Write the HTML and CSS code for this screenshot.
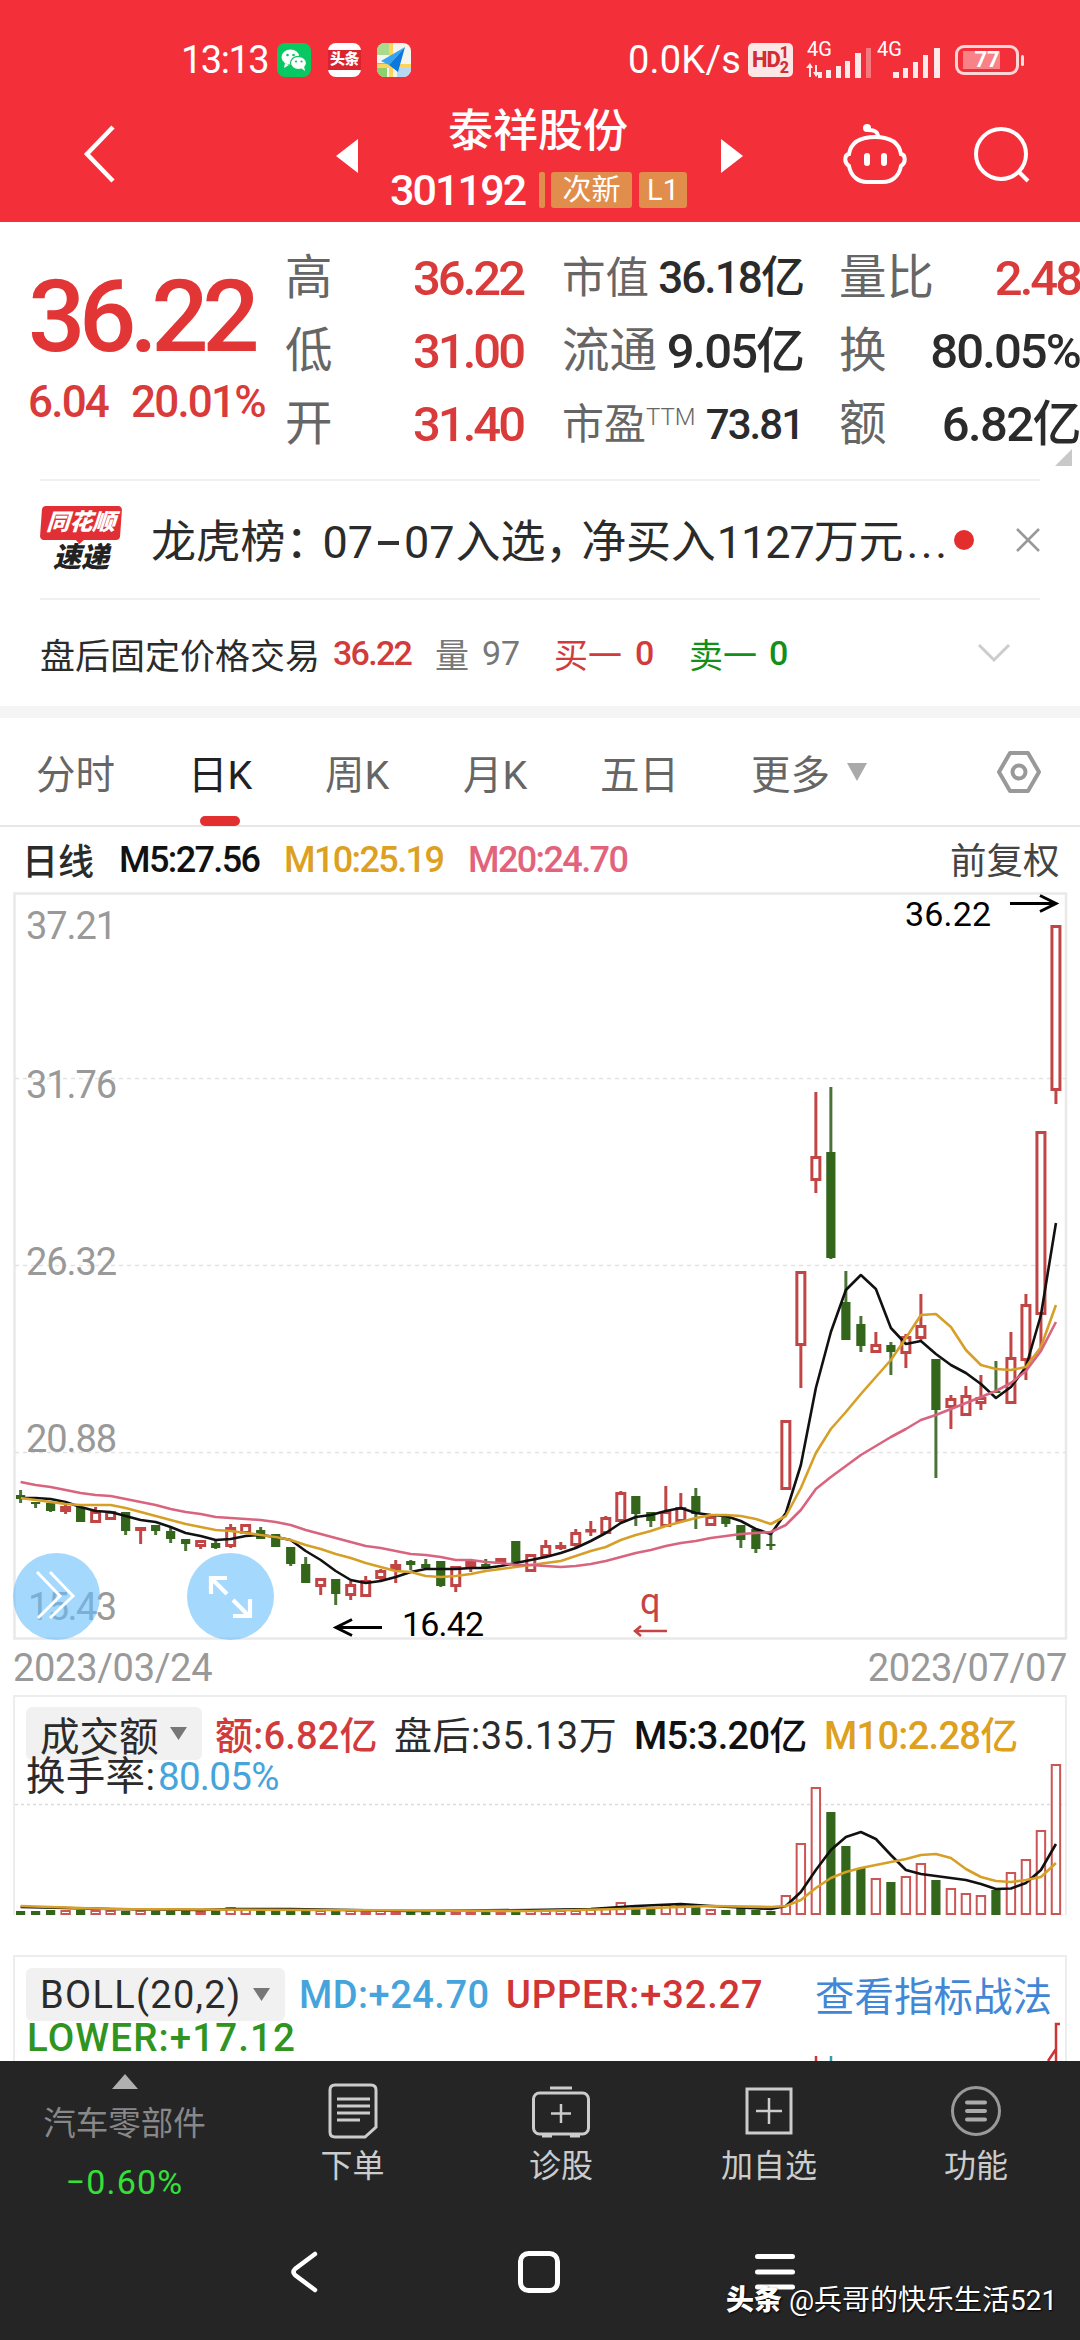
FILE: index.html
```html
<!DOCTYPE html>
<html lang="zh-CN">
<head>
<meta charset="utf-8">
<title>泰祥股份 301192</title>
<link rel="stylesheet" href="styles.css">
</head>
<body>
<div class="screen">
  <header class="header">
    <div class="status">
      <span class="clock">13:13</span>
      <svg width="34" height="34" viewBox="0 0 34 34"><rect width="34" height="34" rx="8" fill="#08c862"/><ellipse cx="13.5" cy="14" rx="9" ry="7.6" fill="#fff"/><path d="M8 20l-1 5 5-3z" fill="#fff"/><ellipse cx="21.5" cy="20" rx="8" ry="6.6" fill="#fff" stroke="#08c862" stroke-width="1.2"/><path d="M24 25l4 3-1-5z" fill="#fff"/><g fill="#08c862"><circle cx="10.5" cy="12" r="1.3"/><circle cx="16.5" cy="12" r="1.3"/><circle cx="19" cy="18.5" r="1.1"/><circle cx="24.5" cy="18.5" r="1.1"/></g></svg>
      <span class="toutiao"><b>头条</b></span>
      <svg width="34" height="34" viewBox="0 0 34 34"><clipPath id="mapclip"><rect width="34" height="34" rx="8"/></clipPath><g clip-path="url(#mapclip)"><rect width="34" height="34" fill="#f3f5ee"/><path d="M0 0h14v12H0z" fill="#a8dc8c"/><path d="M0 20h10v14H0z" fill="#8ccf6c"/><path d="M20 24h14v10H20z" fill="#b7d8f5"/><path d="M14 0v34M0 23h34" stroke="#ffd45c" stroke-width="4"/><path d="M28 4L4 18l8 4z" fill="#38a3f5"/><path d="M28 4L12 22l9 7z" fill="#0b78dd"/></g></svg>
      <span class="speed">0.0K/s</span>
      <span class="hd"><b>HD</b><i>1<br>2</i></span>
      <svg class="signal" width="66" height="44" viewBox="0 -6 66 44"><text x="1" y="15" class="net">4G</text><g fill="#fff" opacity=".9"><path d="M4 22l3 5H5v9H3v-9H0zM10 36l-3-5h2v-7h2v7h3zM12 31h4v6h-4zM20 29h5v8h-5zM30 25h5v12h-5zM39 20h5v17h-5zM49 12h6v25h-6z"/><path d="M60 7h5v30h-5z" opacity=".4"/></g></svg>
      <svg class="signal" width="66" height="44" viewBox="0 -6 66 44"><text x="0" y="15" class="net">4G</text><g fill="#fff" opacity=".9"><path d="M16 31h6v6h-6zM26 27h5v10h-5zM36 21h5v16h-5zM46 14h5v23h-5zM57 7h6v30h-6z"/></g></svg>
      <span class="battery"><b>77</b></span>
    </div>
    <div class="titlebar">
      <svg width="34" height="62" viewBox="0 0 34 62"><path d="M31 4L5 31l26 27" fill="none" stroke="#fff" stroke-width="4.5"/></svg>
      <svg width="22" height="34" viewBox="0 0 22 34"><path d="M22 0v34L0 17z" fill="#fff"/></svg>
      <div class="stock">
        <h1>泰祥股份</h1>
        <div class="code"><span class="num">301192</span><i class="sliver"></i><span class="tag tag-new">次新</span><span class="tag">L1</span></div>
      </div>
      <svg width="22" height="34" viewBox="0 0 22 34"><path d="M0 0v34l22-17z" fill="#fff"/></svg>
      <svg width="66" height="62" viewBox="0 0 66 62"><g fill="none" stroke="#fff" stroke-width="4"><path d="M7 31C9 19 19 14 33 14s24 5 26 17c5 1 5 9 0 12-2 11-10 16-18 16H25C17 59 9 54 7 43c-5-3-5-11 0-12z"/><path d="M36 14c0-6-4-7-10-7" /></g><circle cx="25" cy="5" r="4" fill="#fff"/><path d="M25 33v7M42 33v7" stroke="#fff" stroke-width="6" stroke-linecap="round"/></svg>
      <svg width="58" height="58" viewBox="0 0 58 58"><g fill="none" stroke="#fff" stroke-width="4"><circle cx="29" cy="28" r="25"/><path d="M47 46l9 9"/></g></svg>
    </div>
  </header>

  <section class="quote">
    <div class="price">
      <strong>36.22</strong>
      <div class="change"><span>6.04</span><span>20.01%</span></div>
    </div>
    <div class="stats">
      <span>高</span><b class="up">36.22</b><span class="s44">市值</span><b class="cap">36.18亿</b><span>量比</span><b class="up last">2.48</b>
      <span>低</span><b class="up">31.00</b><span>流通</span><b class="flow">9.05亿</b><span>换</span><b class="turn last">80.05%</b>
      <span>开</span><b class="up">31.40</b><span class="s42">市盈<sup>TTM</sup></span><b class="pe">73.81</b><span>额</span><b class="last amount">6.82亿</b>
    </div>
    <svg class="corner" width="17" height="17" viewBox="0 0 17 17"><path d="M17 0v17H0z" fill="#c9c9c9"/></svg>
  </section>

  <section class="news">
    <div class="brand"><span class="brand-top">同花顺</span><span class="brand-sub">速递</span></div>
    <p>龙虎榜<span class="colon">：</span><span class="nums">07<i></i>07</span>入选<span class="comma">，</span>净买入<span class="n2">1127</span>万元<span class="dots">...</span></p>
    <i class="dot"></i>
    <svg width="24" height="24" viewBox="0 0 24 24"><path d="M1 1l22 22M23 1L1 23" stroke="#999" stroke-width="2.6"/></svg>
  </section>

  <section class="after">
    <span>盘后固定价格交易</span><b class="up">36.22</b><span class="gray">量</span><span class="gray num">97</span><span class="up">买一</span><b class="up">0</b><span class="down">卖一</span><b class="down">0</b>
    <svg width="34" height="20" viewBox="0 0 34 20"><path d="M2 2l15 15L32 2" fill="none" stroke="#ccc" stroke-width="3"/></svg>
  </section>

  <nav class="tabs">
    <span>分时</span><span class="active">日K</span><span>周K</span><span>月K</span><span>五日</span><span>更多<svg width="20" height="18" viewBox="0 0 20 18"><path d="M0 0h20L10 18z" fill="#aaa"/></svg></span>
    <svg width="46" height="44" viewBox="0 0 46 44"><path d="M14 3h18l11 19-11 19H14L3 22z" fill="none" stroke="#999" stroke-width="4" stroke-linejoin="round"/><circle cx="23" cy="22" r="6.5" fill="none" stroke="#999" stroke-width="4"/></svg>
  </nav>

  <div class="ma-row"><span class="kname">日线</span><b>M5:27.56</b><b class="gold">M10:25.19</b><b class="pink">M20:24.70</b><span class="adj">前复权</span></div>

  <section class="kchart">
    <svg id="kline" width="1080" height="748" viewBox="0 0 1080 748">
      <path d="M14.500 1.500H1066V746.500H14.500z" fill="none" stroke="#e9e9e9" stroke-width="2.500"/>
      <path d="M15 186.500H1066M15 373.500H1066M15 560.500H1066" stroke="#e2e2e2" stroke-width="1.500" stroke-dasharray="4 4"/>
      <g class="axis">
        <text x="26" y="47" textLength="91">37.21</text><text x="26" y="206" textLength="91">31.76</text><text x="26" y="383" textLength="91">26.32</text><text x="26" y="560" textLength="91">20.88</text><text x="28" y="728" textLength="89">15.43</text>
      </g>
      <g id="series"></g>
      <g class="mark"><text x="905" y="34" textLength="86">36.22</text><text x="402" y="744" textLength="82">16.42</text></g>
      <path d="M1010 11.500h45M1040 3.500l16 8-16 8M382 735.500h-45M352 727.500l-16 8 16 8" fill="none" stroke="#000" stroke-width="3"/>
      <text x="640" y="722" class="q">q</text>
      <path d="M667 739h-31M641 734l-6 5 6 5" fill="none" stroke="#c64444" stroke-width="2.500"/>
    </svg>
    <div class="floats">
      <span class="float"><svg width="86" height="86" viewBox="0 0 86 86"><path d="M24 19l23 24-22 22M37 19l23 24-23 22" fill="none" stroke="#fff" stroke-width="3"/></svg></span>
      <span class="float"><svg width="86" height="86" viewBox="0 0 86 86"><path d="M24 41V25h16M26 27l14 14M46 47l16 16M63 46v17H46" fill="none" stroke="#fff" stroke-width="4.200"/></svg></span>
    </div>
  </section>
  <div class="dates"><span>2023/03/24</span><span>2023/07/07</span></div>

  <section class="volume">
    <div class="ind-row vrow"><span class="select">成交额<svg width="17" height="13" viewBox="0 0 17 13"><path d="M0 0h17L8.500 13z" fill="#777"/></svg></span><span class="up med amt">额:6.82亿</span><span class="post">盘后:35.13万</span><span class="black med">M5:3.20亿</span><span class="gold med">M10:2.28亿</span></div>
    <div class="ind-sub"><span class="rate">换手率:</span><span class="blue">80.05%</span></div>
    <svg id="vols" class="vols" width="1052" height="220" viewBox="14 0 1052 220"></svg>
  </section>

  <section class="boll">
    <div class="ind-row brow"><span class="select">BOLL(20,2)<svg width="17" height="13" viewBox="0 0 17 13"><path d="M0 0h17L8.500 13z" fill="#777"/></svg></span><span class="blue med md">MD:+24.70</span><span class="crimson med upper">UPPER:+32.27</span><a>查看指标战法</a></div>
    <div class="ind-sub lower">LOWER:+17.12</div>
    <svg class="vols" width="1052" height="106" viewBox="14 0 1052 106"><path d="M1060 69h-4v37M1048 106l8-12v12M816 101v5" fill="none" stroke="#cf3434" stroke-width="2.500"/><path d="M831 101v5" stroke="#3b9aa8" stroke-width="2.500"/></svg>
  </section>

  <footer class="bottom">
    <div class="sector"><svg width="26" height="15" viewBox="0 0 26 15"><path d="M13 0l13 15H0z" fill="#b0b0b0"/></svg><span>汽车零部件</span><b>−0.60%</b></div>
    <div class="item"><svg width="50" height="56" viewBox="0 0 50 56"><path d="M7 2h36q5 0 5 5v37L37 54H7q-5 0-5-5V7q0-5 5-5z" fill="none" stroke="#ccc" stroke-width="3"/><path d="M9 16h33M9 23h33M9 30h33M9 37h23" stroke="#ccc" stroke-width="3"/></svg><span>下单</span></div>
    <div class="item"><svg width="60" height="56" viewBox="0 0 60 56"><rect x="2.500" y="10" width="55" height="41" rx="6" fill="none" stroke="#ccc" stroke-width="3"/><path d="M19 5h22M11 53h10M39 53h10" stroke="#ccc" stroke-width="3"/><path d="M30 21v19M20 30.500h20" stroke="#ccc" stroke-width="2.500"/></svg><span>诊股</span></div>
    <div class="item"><svg width="50" height="56" viewBox="0 0 50 56"><rect x="3" y="6" width="44" height="44" fill="none" stroke="#ccc" stroke-width="3"/><path d="M25 15v26M12 28h26" stroke="#ccc" stroke-width="2.500"/></svg><span>加自选</span></div>
    <div class="item"><svg width="52" height="56" viewBox="0 0 52 56"><circle cx="26" cy="28" r="23.500" fill="none" stroke="#999" stroke-width="3"/><path d="M17 19.500h18M17 28h18M17 36.500h18" stroke="#aaa" stroke-width="4" stroke-linecap="round"/></svg><span>功能</span></div>
  </footer>
  <div class="sysnav">
    <svg width="28" height="42" viewBox="0 0 28 42"><path d="M25 3L5 18q-3 3 0 6l20 15" fill="none" stroke="#fff" stroke-width="4.500" stroke-linecap="round"/></svg>
    <svg width="42" height="42" viewBox="0 0 42 42"><rect x="2.500" y="2.500" width="37" height="37" rx="8" fill="none" stroke="#fff" stroke-width="5"/></svg>
    <svg width="40" height="38" viewBox="0 0 40 38"><path d="M2.500 3.500h35M2.500 19h35M2.500 34h35" stroke="#fff" stroke-width="5" stroke-linecap="round"/></svg>
    <div class="watermark"><b>头条</b> @兵哥的快乐生活521</div>
  </div>
</div>
<script src="chart.js"></script>
</body>
</html>
```

FILE: styles.css
```css
* { box-sizing: border-box; }
body { margin: 0; background: #fff; font-family: Roboto, "Noto Sans CJK SC", sans-serif; color: #2b2b2b; }
svg { display: block; flex: none; overflow: visible; }
i { font-style: normal; }
b { font-weight: 500; }
.screen { width: 1080px; height: 2340px; overflow: hidden; display: flex; flex-direction: column; white-space: nowrap; }
.screen > * { flex: none; }
.up { color: #d23b3b; }
.down { color: #129018; }
.gold { color: #dda01f; }
.pink { color: #e2637c; }
.blue { color: #46a4dd; }
.black { color: #111; }
.crimson { color: #d03434; }
.med { font-weight: 500; }
.gray { color: #777; }

.header { height: 222px; background: #f3303a; color: #fff; }
.status { height: 85px; padding: 34px 0 0 181px; display: grid; grid-template-columns: 96px 51px 49px 251px 120px 58px 71px 78px 72px; align-items: center; font-size: 38px; }
.clock { letter-spacing: -1.5px; }
.speed { letter-spacing: 0.2px; }
.toutiao { width: 33px; height: 34px; border-radius: 8px; background: linear-gradient(#fff 7px, #d9232e 7px 27px, #fff 27px); display: grid; place-items: center; }
.toutiao b { font-size: 15px; font-weight: 900; line-height: 1; letter-spacing: -0.5px; }
.hd { width: 45px; height: 34px; border-radius: 5px; background: #fde6e6; color: #d22c34; display: flex; align-items: center; justify-content: center; font-size: 22px; }
.hd b { font-weight: 800; letter-spacing: -1px; }
.hd i { font-size: 16px; line-height: 15px; font-weight: 800; }
.signal { margin-top: -5px; }
.net { font-size: 20px; fill: #fff; }
.battery { width: 64px; height: 30px; border: 3px solid rgba(255,255,255,.8); border-radius: 9px; display: grid; place-items: center; position: relative; background: linear-gradient(rgba(255,255,255,.4), rgba(255,255,255,.4)) 5px 3px / 37px 18px no-repeat; }
.battery b { font-size: 22px; line-height: 20px; font-weight: 700; }
.battery::after { content: ""; position: absolute; right: -8px; top: 7px; width: 3px; height: 11px; background: rgba(255,255,255,.85); border-radius: 2px; }
.titlebar { height: 137px; padding-left: 82px; display: grid; grid-template-columns: 254px 54px 331px 121px 130px 60px; align-items: center; }
.titlebar > svg:nth-child(2), .titlebar > svg:nth-child(4) { margin-top: 5px; }
.titlebar > svg:nth-child(6) { margin-top: 3px; }
.stock { height: 137px; }
.stock h1 { margin: 20px 0 0 58px; font-size: 45px; line-height: 54px; font-weight: 500; }
.code { display: flex; align-items: center; margin-top: 12px; height: 38px; }
.code .num { width: 149px; font-size: 43px; line-height: 38px; font-weight: 500; letter-spacing: -1.9px; }
.sliver { width: 6px; height: 36px; background: #e18d4b; margin-right: 6px; border-radius: 2px; }
.tag { height: 36px; width: 48px; background: #e18d4b; border-radius: 3px; font-size: 29px; line-height: 36px; text-align: center; }
.tag-new { width: 81px; margin-right: 7px; }

.quote { height: 257px; display: grid; grid-template-columns: 286px 794px; position: relative; }
.price { padding: 40px 0 0 28px; color: #e23535; }
.price strong { display: block; font-size: 101px; line-height: 110px; font-weight: 500; letter-spacing: -6.5px; }
.change { display: grid; grid-template-columns: 103px auto; margin-top: 5px; font-size: 44px; line-height: 50px; font-weight: 500; letter-spacing: -1.8px; color: #d93a3a; }
.stats { padding-top: 20px; display: grid; grid-template-columns: 110px 167px 100px 177px 90px 150px; grid-template-rows: repeat(3, 73px); font-size: 49px; line-height: 73px; color: #2b2b2b; }
.stats > span { color: #666; font-size: 47.500px; margin-left: -1px; }
.stats > b { justify-self: end; letter-spacing: -3px; margin-right: 37px; }
.stats > .up { color: #d93a3a; margin-right: 40px; }
.stats > .last { margin-right: 0; }
.stats > .turn { letter-spacing: -1.9px; }
.stats > .amount { letter-spacing: -1.6px; }
.stats > .cap { font-size: 44px; letter-spacing: -1.9px; }
.stats > .flow { letter-spacing: -2px; }
.stats > .pe { font-size: 42px; letter-spacing: -2px; }
.stats > .s44 { font-size: 43.500px; }
.stats > .s42 { font-size: 42px; }
.stats sup { font-size: 24px; line-height: 1; vertical-align: 14px; font-weight: 300; }
.corner { position: absolute; right: 8px; bottom: 13px; }

.news { height: 121px; margin: 0 40px; border-top: 2px solid #f0f0f0; border-bottom: 2px solid #f0f0f0; display: grid; grid-template-columns: 111px 803px 62px 24px; align-items: center; }
.news p { margin: -2px 0 0; font-size: 45px; letter-spacing: -0.2px; }
.colon { letter-spacing: -8px; }
.comma { letter-spacing: -9px; }
.nums { display: inline-flex; align-items: center; letter-spacing: 0; margin-right: 1px; }
.nums i { width: 21px; height: 4px; background: #333; margin: 0 5px; }
.n2 { letter-spacing: -1px; margin-left: 1px; }
.dots { letter-spacing: 2.500px; margin-left: 3px; }
.dot { width: 20px; height: 20px; border-radius: 50%; background: #e42e2e; }
.brand { display: flex; flex-direction: column; align-items: center; width: 82px; line-height: 1; font-style: italic; font-weight: 900; margin-top: 1px; }
.brand-top { width: 80px; height: 34px; background: #e22f35; color: #fff; border-radius: 4px; font-size: 23px; line-height: 33px; text-align: center; transform: skewX(-4deg); }
.brand-top::after { content: ""; position: absolute; left: 36px; top: 34px; border: 4px solid transparent; border-top-color: #e22f35; }
.brand-sub { font-size: 28px; line-height: 32px; color: #222; margin-top: 2px; }

.after { height: 118px; padding: 0 0 0 40px; border-bottom: 12px solid #f4f4f4; display: grid; grid-template-columns: 293px 102px 47px 72px 81px 54px 80px 208px 34px; align-items: center; font-size: 34px; }
.after > span:first-child { font-size: 35px; }
.after b { letter-spacing: -1.7px; }

.tabs { height: 109px; padding: 0 0 2px 36px; border-bottom: 2px solid #e6e6e6; display: grid; grid-template-columns: 152px 137px 138px 137px 151px 244px 46px; align-items: center; font-size: 39.500px; color: #666; }
.tabs > span { display: flex; align-items: center; height: 107px; position: relative; }
.tabs > span svg { margin-left: 17px; }
.tabs > svg { margin: 1px 0 0 1px; }
.tabs .active { color: #222; }
.tabs .active::after { content: ""; position: absolute; left: 12px; bottom: -1px; width: 40px; height: 10px; border-radius: 5px; background: #e22f2f; }

.ma-row { height: 65px; padding-left: 22px; display: grid; grid-template-columns: 97px 165px 184px 482px auto; align-items: center; font-size: 36px; }
.ma-row b { letter-spacing: -1.6px; }
.ma-row b:nth-child(2) { color: #111; }
.ma-row .kname { font-size: 36px; font-weight: 500; margin-top: -2px; }
.ma-row .adj { font-size: 36.500px; color: #444; margin-top: -2px; }
.ma-row .gold { color: #dda01f; }

.kchart { height: 748px; position: relative; }
.axis { font-size: 38px; fill: #999; }
.mark { font-size: 34px; fill: #000; }
.q { font-size: 36px; fill: #c64444; }
.floats { position: absolute; left: 13px; top: 661px; display: flex; gap: 87px; }
.float { width: 87px; height: 87px; border-radius: 50%; background: rgba(103, 190, 252, .6); }
.dates { height: 55px; padding: 0 13px; display: flex; justify-content: space-between; align-items: center; font-size: 38px; color: #999; letter-spacing: -0.3px; }

.volume { height: 220px; margin: 0 13px; border: 2px solid #ededed; border-bottom: 0; position: relative; }
.boll { height: 106px; margin: 40px 13px 0; border: 2px solid #ededed; border-bottom: 0; position: relative; }
.ind-row { display: grid; align-items: center; height: 53px; margin-top: 10px; padding-left: 11px; font-size: 38px; }
.vrow { grid-template-columns: 189px 179px 240px 190px auto; }
.vrow > span { letter-spacing: -0.7px; margin-top: -3px; }
.vrow > .amt { letter-spacing: 0.2px; }
.vrow > .post { letter-spacing: 0.5px; }
.brow { grid-template-columns: 273px 207px 309px auto; }
.brow > .md { letter-spacing: 0.5px; }
.brow > .upper { letter-spacing: 0.9px; }
.select { height: 53px; justify-self: start; display: flex; align-items: center; gap: 11px; padding: 0 15px 0 14px; background: #f1f1f1; border-radius: 6px; }
.vrow .select { letter-spacing: 0; font-size: 39.500px; margin-top: 0; }
.brow .select { letter-spacing: 1.3px; }
.ind-sub { padding-left: 11px; font-size: 38.500px; line-height: 36px; margin-top: -1px; letter-spacing: -0.7px; position: relative; z-index: 1; }
.rate { display: inline-block; width: 132px; font-size: 39.500px; letter-spacing: 0.3px; }
.lower { padding-left: 12px; color: #2f9420; font-weight: 500; letter-spacing: 1.1px; margin-top: 0; }
.boll a { font-size: 39.500px; color: #4287d6; margin-top: -2px; }
.vols { position: absolute; left: -1px; top: -2px; }

.bottom { height: 159px; background: #252525; color: #ccc; display: grid; grid-template-columns: 249px 207px 210px 206px 208px; font-size: 32px; position: relative; z-index: 2; }
.sector { display: flex; flex-direction: column; align-items: center; padding-top: 13px; }
.sector span { font-size: 32.500px; line-height: 40px; margin-top: 15px; color: #888; }
.sector b { color: #35e03a; font-size: 34px; letter-spacing: 1.2px; line-height: 40px; margin-top: 18px; font-weight: 400; }
.item { display: flex; flex-direction: column; align-items: center; padding-top: 22px; }
.item span { line-height: 40px; margin-top: 7px; }
.sysnav { height: 120px; background: #252525; position: relative; display: grid; grid-template-columns: 228px 237px 40px; padding: 31px 0 0 290px; align-items: start; }
.sysnav svg:nth-child(3) { margin-top: 2px; }
.watermark { position: absolute; left: 726px; top: 61px; font-size: 28px; line-height: 40px; color: #fff; letter-spacing: 0; text-shadow: 1px 1px 2px #000; }
.watermark b { font-weight: 900; }
.up-stroke { stroke: #c24545; fill: #fff; stroke-width: 3; }
.down-fill { fill: #33661a; }
.line { fill: none; stroke-width: 2.600; stroke-linejoin: round; }
```

FILE: chart.js
```js
// Each candle: direction (r = rise, g = fall), wick top, wick bottom, body top, body bottom
const candles = `g 598 611 603 607|g 610 616 610 612|g 610 620 611 619|r 613 622 614 620|g 615 630 615 630|r 615 631 619 631|r 619 628 619 628|g 620 643 620 639|r 635 652 635 639|g 633 643 633 639|g 636 651 639 647|g 647 659 647 652|r 648 657 648 655|g 648 657 651 656|r 632 656 635 655|r 632 642 632 642|g 635 647 638 647|g 642 655 642 655|g 655 674 655 672|g 665 691 672 691|r 686 703 686 695|g 687 713 687 702|r 689 708 692 704|r 684 705 688 705|r 677 688 678 687|r 668 691 672 678|g 668 678 669 673|g 667 677 672 676|g 669 695 669 694|r 674 700 674 695|r 667 680 669 675|g 667 677 672 676|r 666 672 666 672|g 649 670 649 670|r 662 680 662 680|r 648 666 653 665|r 650 658 653 657|r 637 656 640 654|r 629 644 637 639|r 624 642 625 642|r 599 631 600 630|g 604 634 604 622|g 620 635 620 629|r 594 635 619 635|r 601 631 615 630|g 596 637 604 622|r 624 634 624 634|g 624 635 625 632|g 633 656 633 648|g 636 661 637 657|g 641 658 652 654|r 528 598 528 598|r 379 496 379 454|r 200 301 264 289|g 195 367 260 366|g 379 448 410 448|g 424 460 432 454|r 440 461 452 461|g 450 483 453 460|r 442 476 444 462|r 402 448 433 447|g 467 586 467 518|r 503 537 506 516|r 494 524 503 524|r 483 518 505 512|g 469 501 499 501|r 440 512 465 512|r 402 488 412 469|r 239 455 239 423|r 33 212 33 199`
  .split('|').map(s => s.split(' ').map((v, i) => i ? +v : v));
const m5 = [606,606,607,610,615,619,620,624,628,630,635,641,644,648,647,644,643,645,648,659,668,679,688,691,689,685,680,677,677,677,676,676,674,671,668,665,661,656,649,641,631,625,623,619,616,621,623,624,629,637,642,621,573,496,440,398,383,397,436,452,449,462,473,481,492,506,495,475,423,331];
const m10 = [606,608,610,612,613,613,613,616,620,624,628,632,635,638,639,641,643,645,648,653,657,662,666,671,675,679,680,684,685,684,682,679,677,675,673,671,669,664,659,655,648,643,639,634,630,626,623,623,624,627,632,624,596,561,537,520,502,485,468,446,423,422,435,458,473,477,478,475,455,413];
const m20 = [590,593,595,598,601,603,604,607,610,613,617,620,622,625,626,627,628,630,633,638,642,646,650,654,656,659,662,663,665,668,668,670,671,673,673,674,675,674,672,669,665,661,658,654,651,649,646,644,642,641,640,633,618,597,585,574,563,554,545,537,528,523,517,511,505,499,491,479,459,430];
const vol = [4,4,5,5,5,5,5,4,5,4,4,4,4,4,8,7,5,5,5,5,5,4,5,4,5,4,3,3,3,4,4,3,3,5,5,5,5,5,6,8,13,10,6,11,11,8,6,5,7,5,4,20,72,128,103,69,47,37,33,39,52,35,27,22,20,25,43,56,85,151];
const v5 = [[0,8],[6,6],[12,5],[14,6],[18,6],[26,4],[34,5],[38,6],[41,9],[44,11],[46,9],[50,6],[51,9],[52,23],[53,45],[54,65],[55,78],[56,83],[57,76],[58,60],[59,45],[60,41],[61,39],[62,37],[63,35],[64,31],[65,26],[66,26.5],[67,32],[68,45],[69,71]];
const v10 = [[0,9],[6,6],[20,5],[34,4],[40,6],[46,9],[50,8],[51,9],[52,15],[53,27],[54,37],[55,43],[56,47],[57,50],[58,53],[59,56],[60,60],[61,61],[62,57],[63,46],[64,38],[65,34],[66,33],[67,35],[68,38],[69,52]];

const x = i => 20.6 + 15.005 * i;
const line = (pts, color) => `<polyline class="line" stroke="${color}" points="${pts.map(p => p.join(',')).join(' ')}"/>`;
const box = (cx, top, bottom, rise) => {
  if (!rise) return `<rect class="down-fill" x="${cx - 4.6}" y="${top}" width="9.2" height="${bottom - top}"/>`;
  const h = Math.max(bottom - top - 3, 0.5);
  return `<rect class="up-stroke" x="${cx - 4}" y="${top + 1.5}" width="8" height="${h}"/>`;
};

document.getElementById('series').innerHTML = candles.map(([dir, wt, wb, t, b], i) =>
  `<path d="M${x(i)} ${wt}V${wb}" stroke="${dir === 'r' ? '#c24545' : '#4c7337'}" stroke-width="3"/>` + box(x(i), t, b, dir === 'r')
).join('') +
  line(m5.map((y, i) => [x(i), y]), '#111') +
  line(m10.map((y, i) => [x(i), y]), '#d6a028') +
  line(m20.map((y, i) => [x(i), y]), '#d9647f');

const base = 220;
document.getElementById('vols').innerHTML =
  '<path d="M15 109.500H1066" stroke="#dcdcdc" stroke-width="1.500" stroke-dasharray="3 3"/>' +
  vol.map((h, i) => {
    const rise = candles[i][0] === 'r';
    return rise
      ? `<rect x="${x(i) - 4.2}" y="${base - h + 1}" width="8.400" height="${h - 2}" fill="#fff" stroke="#cc5555" stroke-width="2"/>`
      : box(x(i), base - h, base, false);
  }).join('') +
  line(v5.map(([i, h]) => [x(i), base - h]), '#111') +
  line(v10.map(([i, h]) => [x(i), base - h]), '#d6a028');
```
